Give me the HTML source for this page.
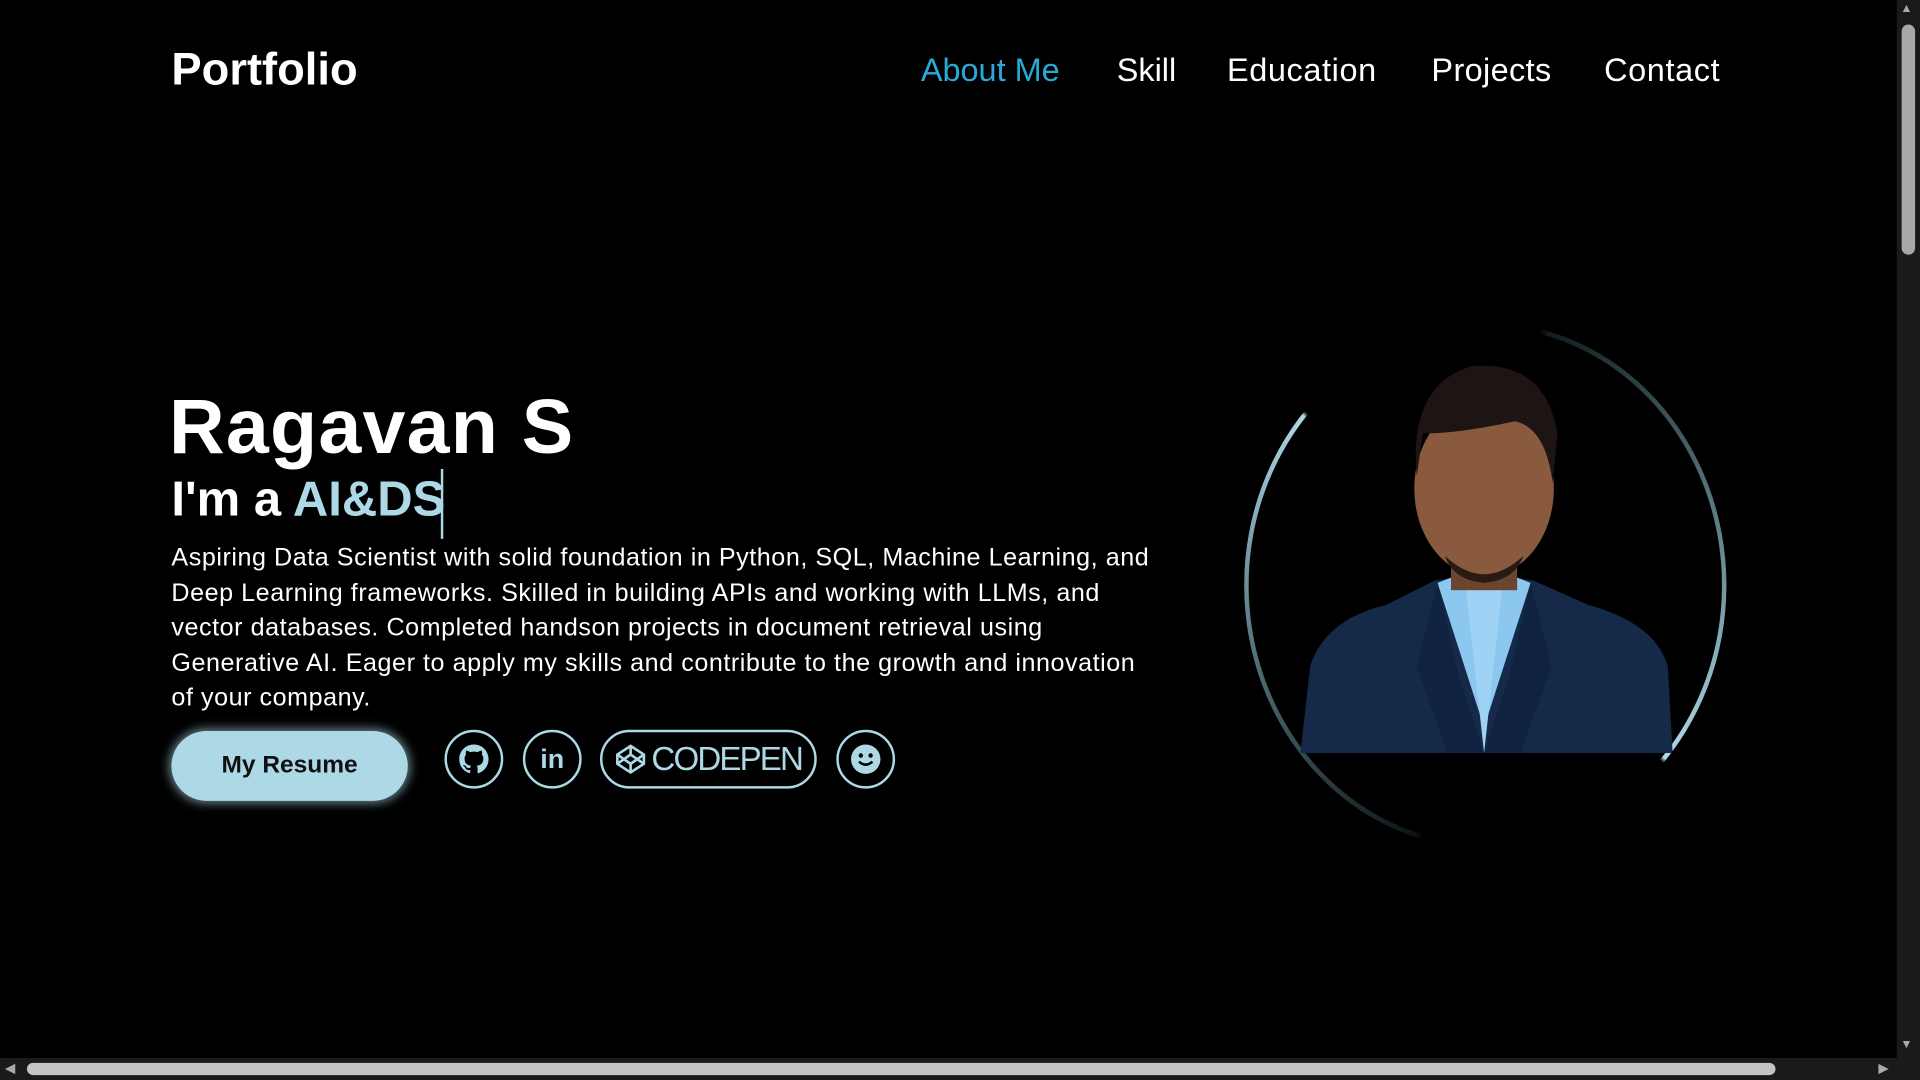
<!DOCTYPE html>
<html><head><meta charset="utf-8"><style>
html,body{margin:0;padding:0;background:#000;overflow:hidden;width:1920px;height:1080px}
#w{position:absolute;left:0;top:0;width:1568px;height:882px;transform:scale(1.2244898);transform-origin:0 0;font-family:"Liberation Sans",sans-serif;color:#fff}
.a{position:absolute;white-space:nowrap}
.nav span{position:absolute;top:42px;font-size:26.5px;font-weight:500}
.ic{position:absolute;top:596px;height:44px;border:2px solid #add8e6;border-radius:24px;display:flex;align-items:center;justify-content:center;color:#add8e6}
</style></head><body><div id="w">
<div class="a" style="left:140px;top:36px;font-size:37px;font-weight:bold">Portfolio</div>
<div class="nav">
<span style="left:752px;color:#2aa8d6">About Me</span>
<span style="left:912px">Skill</span>
<span style="left:1002px;letter-spacing:0.5px">Education</span>
<span style="left:1169px;letter-spacing:0.3px">Projects</span>
<span style="left:1310px;letter-spacing:0.5px">Contact</span>
</div>
<div class="a" style="left:138px;top:313px;font-size:63px;font-weight:bold;letter-spacing:1px">Ragavan S</div>
<div class="a" style="left:140px;top:386px;font-size:40px;font-weight:bold">I'm a <span style="color:#add8e6">AI&amp;DS</span></div>
<div class="a" style="left:360px;top:383px;width:2px;height:57px;background:#add8e6"></div>
<div class="a" style="left:140px;top:442px;font-size:20.5px;line-height:28.6px;letter-spacing:0.45px">Aspiring Data Scientist with solid foundation in Python, SQL, Machine Learning, and<br>Deep Learning frameworks. Skilled in building APIs and working with LLMs, and<br>vector databases. Completed handson projects in document retrieval using<br>Generative AI. Eager to apply my skills and contribute to the growth and innovation<br>of your company.</div>
<div class="a" style="left:140px;top:597px;width:193px;height:57px;border-radius:29px;background:#add8e6;box-shadow:0 0 8px 2px rgba(173,216,230,.6);color:#111;font-size:20px;font-weight:bold;display:flex;align-items:center;justify-content:center">My Resume</div>
<div class="ic" style="left:363px;width:44px">
<svg width="24" height="24" viewBox="0 0 16 16"><path fill="#add8e6" d="M8 0C3.58 0 0 3.58 0 8c0 3.54 2.29 6.530 5.47 7.59.4.07.55-.17.55-.38v-1.33c-2.230.48-2.7-1.07-2.7-1.07-.36-.92-.89-1.170-.89-1.17-.73-.5.06-.49.06-.49.8.06 1.23.82 1.23.82.72 1.23 1.88.87 2.34.67.07-.52.28-.87.51-1.07-1.78-.2-3.64-.89-3.64-3.95 0-.87.31-1.590.82-2.15-.08-.2-.36-1.02.08-2.12 0 0 .67-.21 2.2.82a7.6 7.6 0 0 1 4 0c1.53-1.04 2.2-.82 2.2-.82.44 1.1.16 1.92.08 2.12.51.56.82 1.27.82 2.15 0 3.07-1.87 3.75-3.65 3.95.29.25.54.73.54 1.48v2.2c0 .21.15.46.55.38A8 8 0 0 0 16 8c0-4.42-3.58-8-8-8z"/></svg></div>
<div class="ic" style="left:427px;width:44px;font-size:22px;font-weight:bold">in</div>
<div class="ic" style="left:490px;width:173px;font-size:27px;letter-spacing:-1.5px"><svg width="26" height="26" viewBox="0 0 24 24" style="margin-right:4px" fill="none" stroke="#add8e6" stroke-width="2"><path d="M12 2l10 6.5v7L12 22 2 15.5v-7z M12 22v-6.5 M22 8.5l-10 7-10-7 M2 15.5l10-7 10 7 M12 2v6.5"/></svg>CODEPEN</div>
<div class="ic" style="left:683px;width:44px"><svg width="26" height="26" viewBox="0 0 26 26"><circle cx="13" cy="13" r="12" fill="#add8e6"/><circle cx="9" cy="10" r="1.8" fill="#000"/><circle cx="17" cy="10" r="1.8" fill="#000"/><path d="M7.5 15q5.5 5 11 0" stroke="#000" stroke-width="2" fill="none"/></svg></div>
<div class="a" style="left:1016px;top:263px;width:394px;height:430px;border-radius:50%;background:conic-gradient(transparent 0deg,transparent 12deg,#111c20 14deg,#7fa5b0 100deg,#add8e6 134deg,transparent 135deg,transparent 194deg,#0d1518 196deg,#5d7d87 260deg,#add8e6 313deg,transparent 314deg);-webkit-mask:radial-gradient(closest-side,transparent calc(100% - 4px),#000 calc(100% - 3.5px));mask:radial-gradient(closest-side,transparent calc(100% - 4px),#000 calc(100% - 3.5px))"></div>
<svg class="a" style="left:1062px;top:294px" width="304" height="321" viewBox="0 0 304 321">
<path d="M0 321L8 250Q20 212 70 200L110 180L150 175L190 180L235 200Q290 215 300 250L304 321z" fill="#142a48"/>
<path d="M112 182L150 300L188 182L170 175H130z" fill="#8cc7ef"/>
<path d="M135 185L150 321L165 185z" fill="#9fd3f5"/>
<path d="M112 182L130 260L150 321L120 321L95 250z M188 182L170 260L150 321L180 321L205 250z" fill="#0f2340"/>
<rect x="123" y="140" width="54" height="48" fill="#6b4530"/>
<ellipse cx="150" cy="105" rx="57" ry="72" fill="#8a5a3e"/>
<path d="M95 95Q88 20 140 5Q200 0 210 60L206 100Q200 55 175 50Q130 60 100 60z" fill="#1d1414"/>
<path d="M118 160Q150 190 182 160Q175 180 150 182Q125 180 118 160z" fill="#2a1a14"/>
</svg>
<div class="a" style="left:1549px;top:0;width:19px;height:864px;background:#1a1a1a"></div>
<div class="a" style="left:1553px;top:20px;width:11px;height:188px;border-radius:6px;background:#a8a8a8"></div>
<div class="a" style="left:0;top:864px;width:1568px;height:18px;background:#1a1a1a"></div>
<div class="a" style="left:22px;top:868px;width:1428px;height:10px;border-radius:5px;background:#c4c4c4"></div>
<div class="a" style="left:1552px;top:2px;font-size:10px;color:#aaa">▲</div>
<div class="a" style="left:1552px;top:848px;font-size:10px;color:#aaa">▼</div>
<div class="a" style="left:4px;top:866px;font-size:11px;color:#aaa">◀</div>
<div class="a" style="left:1534px;top:866px;font-size:11px;color:#aaa">▶</div>
</div></body></html>
